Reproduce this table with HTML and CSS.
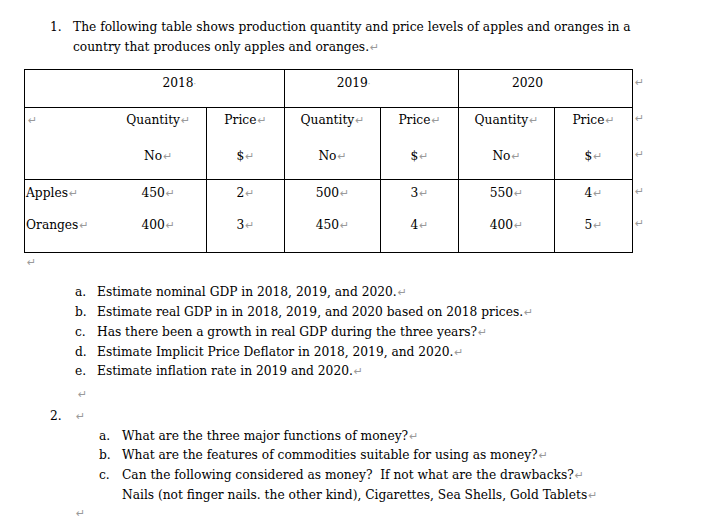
FILE: index.html
```html
<!DOCTYPE html>
<html lang="en">
<head>
<meta charset="utf-8">
<title>GDP questions</title>
<link rel="stylesheet" href="styles.css">
</head>
<body>
<div class="page">
  <div class="q q1">
    <span class="qnum">1.</span>
    <div class="qbody">
      <p class="line">The following table shows production quantity and price levels of apples and oranges in a</p>
      <p class="line">country that produces only apples and oranges.<span class="pm">↵</span></p>
    </div>
  </div>

  <div class="table-wrap">
    <table class="data">
      <colgroup>
        <col class="c-label"><col class="c-qty"><col class="c-price"><col class="c-qty"><col class="c-price"><col class="c-qty"><col class="c-price">
      </colgroup>
      <tr class="r1">
        <td class="label noright"></td>
        <td class="year noleft" colspan="2">2018<span class="dot">·</span></td>
        <td class="year" colspan="2">2019<span class="dot">·</span></td>
        <td class="year" colspan="2">2020</td>
      </tr>
      <tr class="r2 nobottom">
        <td class="label noright"><span class="pm">↵</span></td>
        <td class="noleft">Quantity<span class="pm">↵</span></td>
        <td>Price<span class="pm">↵</span></td>
        <td class="gl">Quantity<span class="pm">↵</span></td>
        <td>Price<span class="pm">↵</span></td>
        <td class="gl">Quantity<span class="pm">↵</span></td>
        <td>Price<span class="pm">↵</span></td>
      </tr>
      <tr class="r3">
        <td class="label noright"></td>
        <td class="noleft">No<span class="pm">↵</span></td>
        <td>$<span class="pm">↵</span></td>
        <td class="gl">No<span class="pm">↵</span></td>
        <td>$<span class="pm">↵</span></td>
        <td class="gl">No<span class="pm">↵</span></td>
        <td>$<span class="pm">↵</span></td>
      </tr>
      <tr class="r4 nobottom">
        <td class="label noright">Apples<span class="pm">↵</span></td>
        <td class="noleft">450<span class="pm">↵</span></td>
        <td>2<span class="pm">↵</span></td>
        <td class="gl">500<span class="pm">↵</span></td>
        <td>3<span class="pm">↵</span></td>
        <td class="gl">550<span class="pm">↵</span></td>
        <td>4<span class="pm">↵</span></td>
      </tr>
      <tr class="r5">
        <td class="label noright">Oranges<span class="pm">↵</span></td>
        <td class="noleft">400<span class="pm">↵</span></td>
        <td>3<span class="pm">↵</span></td>
        <td class="gl">450<span class="pm">↵</span></td>
        <td>4<span class="pm">↵</span></td>
        <td class="gl">400<span class="pm">↵</span></td>
        <td>5<span class="pm">↵</span></td>
      </tr>
    </table>
    <div class="row-marks">
      <div class="rmk k1"><span class="pm">↵</span></div>
      <div class="rmk k2"><span class="pm">↵</span></div>
      <div class="rmk k3"><span class="pm">↵</span></div>
      <div class="rmk k4"><span class="pm">↵</span></div>
      <div class="rmk k5"><span class="pm">↵</span></div>
    </div>
  </div>
  <p class="after-table"><span class="pm">↵</span></p>

  <ol class="sub sub1">
    <li><span class="lbl">a.</span><span>Estimate nominal GDP in 2018, 2019, and 2020.<span class="pm">↵</span></span></li>
    <li><span class="lbl">b.</span><span>Estimate real GDP in in 2018, 2019, and 2020 based on 2018 prices.<span class="pm">↵</span></span></li>
    <li><span class="lbl">c.</span><span>Has there been a growth in real GDP during the three years?<span class="pm">↵</span></span></li>
    <li><span class="lbl">d.</span><span>Estimate Implicit Price Deflator in 2018, 2019, and 2020.<span class="pm">↵</span></span></li>
    <li><span class="lbl">e.</span><span>Estimate inflation rate in 2019 and 2020.<span class="pm">↵</span></span></li>
  </ol>
  <p class="blank b1"><span class="pm">↵</span></p>

  <div class="q q2">
    <span class="qnum">2.</span>
    <span class="qbody"><span class="pm">↵</span></span>
  </div>

  <ol class="sub sub2">
    <li><span class="lbl">a.</span><span>What are the three major functions of money?<span class="pm">↵</span></span></li>
    <li><span class="lbl">b.</span><span>What are the features of commodities suitable for using as money?<span class="pm">↵</span></span></li>
    <li><span class="lbl">c.</span><span>Can the following considered as money?&nbsp; If not what are the drawbacks?<span class="pm">↵</span><br>Nails (not finger nails. the other kind), Cigarettes, Sea Shells, Gold Tablets<span class="pm">↵</span></span></li>
  </ol>
  <p class="blank b2"><span class="pm">↵</span></p>
</div>
</body>
</html>
```

FILE: styles.css
```css
html, body {
  margin: 0;
  padding: 0;
  background: #ffffff;
}

body {
  color: #000000;
  font-family: "DejaVu Serif", "Liberation Serif", serif;
  font-stretch: condensed;
  font-size: 13.6px;
  line-height: 19.6px;
}

.page {
  padding-top: 17px;
  width: 706px;
}

p {
  margin: 0;
}

.line {
  white-space: nowrap;
}

.pm {
  font-family: "DejaVu Sans", sans-serif;
  font-stretch: normal;
  font-size: 11px;
  line-height: 0;
  color: #9a9a9a;
  margin-left: 1px;
}

.dot {
  font-size: 9px;
  line-height: 0;
  color: #9a9a9a;
}

.q {
  display: flex;
  padding-left: 50px;
}

.qnum {
  width: 23px;
  flex: none;
}

.q2 .qnum {
  width: 25px;
}

/* table */
.table-wrap {
  display: flex;
  align-items: flex-start;
  margin: 13px 0 0 24px;
}

.data {
  border-collapse: collapse;
  table-layout: fixed;
  width: 608px;
  flex: none;
}

.c-label { width: 86px; }
.c-qty { width: 96px; }
.c-price { width: 78px; }

.data td {
  border: 1px solid #000000;
  padding: 0;
  text-align: center;
  vertical-align: top;
  white-space: nowrap;
  line-height: 19.6px;
}

.data tr.nobottom td {
  border-bottom: none;
}

.data tr.r3 td,
.data tr.r5 td {
  border-top: none;
}

.data tr.r2 td:not(.gl):not(.label) + td,
.data tr.r3 td:not(.gl):not(.label) + td,
.data tr.r4 td:not(.gl):not(.label) + td,
.data tr.r5 td:not(.gl):not(.label) + td {
  border-left: none;
}

.data td.noright { border-right: none; }
.data td.noleft { border-left: none; }

.data td.label {
  text-align: left;
  padding-left: 1px;
}

.data tr.r2 td.label {
  padding-left: 2px;
}

.data td.year {
  padding-right: 36px;
}

.data tr.r1 { height: 38px; }
.data tr.r2 { height: 32px; }
.data tr.r3 { height: 40px; }
.data tr.r4 { height: 32px; }
.data tr.r5 { height: 41px; }

.data tr.r1 td { padding-top: 3px; }
.data tr.r2 td { padding-top: 2px; }
.data tr.r3 td { padding-top: 6px; }
.data tr.r4 td { padding-top: 3px; }
.data tr.r5 td { padding-top: 3px; }

/* end-of-row marks beside the table */
.row-marks {
  display: flex;
  flex-direction: column;
  padding-left: 2px;
  line-height: 19.6px;
}

.rmk .pm {
  margin-left: 0;
}

.k1 { height: 37px; padding-top: 3px; box-sizing: border-box; }
.k2 { height: 32px; padding-top: 2px; box-sizing: border-box; }
.k3 { height: 40px; padding-top: 6px; box-sizing: border-box; }
.k4 { height: 32px; padding-top: 3px; box-sizing: border-box; }
.k5 { height: 41px; padding-top: 3px; box-sizing: border-box; }

.after-table {
  line-height: 16px;
  padding-left: 26px;
}

/* lists */
.sub {
  list-style: none;
  margin: 13px 0 0 0;
  padding: 0;
  line-height: 19.8px;
}

.sub li {
  display: flex;
  white-space: nowrap;
}

.sub1 { padding-left: 75px; }
.sub2 { padding-left: 99px; margin-top: 0; }

.lbl {
  width: 22px;
  flex: none;
}

.sub2 .lbl {
  width: 23px;
}

.blank {
  line-height: 19.8px;
}

.b1 { padding-left: 77px; margin-top: 3px; }
.q2 { margin-top: 2px; }
.b2 { padding-left: 75px; margin-top: -2px; }
```
